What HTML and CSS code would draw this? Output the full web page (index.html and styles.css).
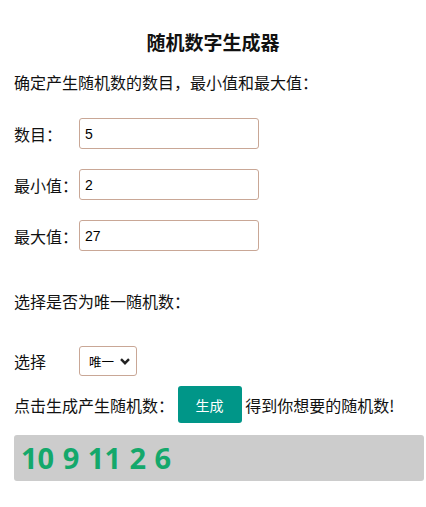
FILE: index.html
```html
<!DOCTYPE html>
<html lang="zh-CN">
<head>
    <meta charset="UTF-8">
    <meta name="viewport" content="width=device-width, initial-scale=1.0">
    <title>随机数字生成器</title>
    <link rel="stylesheet" href="styles.css">
</head>
<body>

    <div id="app">
        <h3 class="title">随机数字生成器</h3>
        <p class="intro">确定产生随机数的数目，最小值和最大值：</p>

        <!-- 输入 -->
        <div class="field">
            <label for="count">数目：</label>
            <input type="text" id="count" value="5">
        </div>
        <div class="field">
            <label for="min">最小值：</label>
            <input type="text" id="min" value="2">
        </div>
        <div class="field">
            <label for="max">最大值：</label>
            <input type="text" id="max" value="27">
        </div>

        <p class="question">选择是否为唯一随机数：</p>

        <div class="field select-row">
            <label for="unique">选择</label>
            <div class="select">
                <span>唯一</span>
                <svg width="10" height="7" viewBox="0 0 10 7"><path d="M1 1.2 L5 5.2 L9 1.2" fill="none" stroke="#222" stroke-width="2.4"/></svg>
            </div>
        </div>

        <p class="action">点击生成产生随机数： <button id="gen-btn">生成</button> 得到你想要的随机数!</p>

        <div id="result">10 9 11 2 6</div>
    </div>

</body>
</html>
```

FILE: styles.css
```css
body {
    font-family: "Noto Sans CJK SC", "Noto Sans", sans-serif;
    font-size: 16px;
    color: #111;
    background-color: #fff;
    margin: 0;
    padding: 0;
}

#app {
    padding: 0 14px;
    display: flex;
    flex-direction: column;
}

.title {
    font-size: 19px;
    font-weight: bold;
    text-align: center;
    line-height: 26px;
    margin: 29px 0 0 0;
}

p {
    margin: 0;
    line-height: 24px;
}

.intro {
    margin-top: 15px;
}

.field {
    display: flex;
    align-items: center;
    margin-top: 20px;
}

.intro + .field {
    margin-top: 24px;
}

.field label {
    width: 65px;
    flex-shrink: 0;
}

.field input {
    width: 180px;
    height: 31px;
    box-sizing: border-box;
    padding: 0 5px;
    border: 1px solid #c9a796;
    border-radius: 3px;
    font-family: "Liberation Sans", Arial, sans-serif;
    font-size: 14px;
    color: #000;
}

.question {
    margin-top: 38px;
}

.select-row {
    margin-top: 33px;
}

.select {
    width: 58px;
    height: 30px;
    box-sizing: border-box;
    border: 1px solid #c9a796;
    border-radius: 3px;
    display: flex;
    align-items: center;
    justify-content: space-between;
    padding: 0 6px 0 9px;
    font-size: 12.5px;
    color: #000;
}

.action {
    margin-top: 10px;
    display: flex;
    align-items: center;
    white-space: pre;
}

#gen-btn {
    width: 64px;
    height: 37px;
    background-color: #009688;
    color: #fff;
    border: none;
    border-radius: 3px;
    font-family: "Noto Sans CJK SC", sans-serif;
    font-size: 14px;
    cursor: pointer;
}

#result {
    margin-top: 12px;
    width: 410px;
    flex-shrink: 0;
    height: 46px;
    box-sizing: border-box;
    background-color: #ccc;
    border-radius: 3px;
    padding-left: 7px;
    font-family: "Open Sans", sans-serif;
    font-weight: bold;
    font-size: 29px;
    line-height: 46px;
    color: #14a86b;
    word-spacing: 1px;
}
```
